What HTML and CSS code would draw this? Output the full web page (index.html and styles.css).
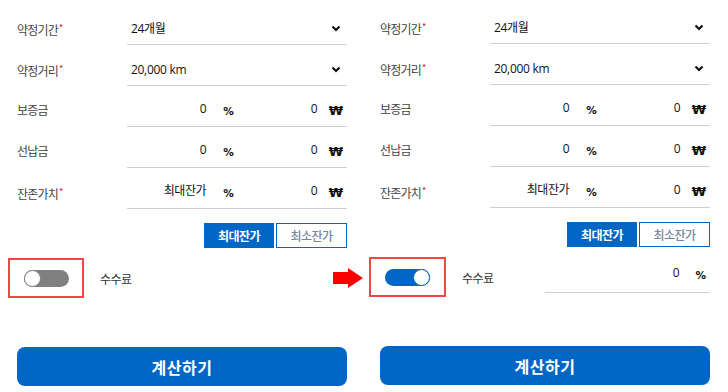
FILE: index.html
```html
<!DOCTYPE html>
<html lang="ko">
<head>
<meta charset="utf-8">
<title>계산</title>
<link rel="stylesheet" href="styles.css">
</head>
<body>
<div class="page">
  <section class="panel panel-left">
    <div class="row">
      <label class="lbl">약정기간<span class="req">*</span></label>
      <div class="field select"><span class="val">24개월</span><svg class="chev" width="10" height="7" viewBox="0 0 10 7"><polyline points="1.5,1.5 5,5 8.5,1.5" fill="none" stroke="#111" stroke-width="2.2"/></svg></div>
    </div>
    <div class="row">
      <label class="lbl">약정거리<span class="req">*</span></label>
      <div class="field select"><span class="val">20,000 km</span><svg class="chev" width="10" height="7" viewBox="0 0 10 7"><polyline points="1.5,1.5 5,5 8.5,1.5" fill="none" stroke="#111" stroke-width="2.2"/></svg></div>
    </div>
    <div class="row">
      <label class="lbl">보증금</label>
      <div class="field split"><span class="num">0</span><span class="unit">%</span><span class="num n2">0</span><span class="unit won">₩</span></div>
    </div>
    <div class="row">
      <label class="lbl">선납금</label>
      <div class="field split"><span class="num">0</span><span class="unit">%</span><span class="num n2">0</span><span class="unit won">₩</span></div>
    </div>
    <div class="row">
      <label class="lbl">잔존가치<span class="req">*</span></label>
      <div class="field split"><span class="num">최대잔가</span><span class="unit">%</span><span class="num n2">0</span><span class="unit won">₩</span></div>
    </div>
    <div class="btn-row">
      <button class="seg seg-on">최대잔가</button>
      <button class="seg">최소잔가</button>
    </div>
    <div class="fee-row">
      <div class="mark"><span class="toggle"><span class="knob"></span></span></div>
      <span class="fee-label">수수료</span>
    </div>
    <button class="calc">계산하기</button>
  </section>

  <svg class="arrow" width="30" height="20" viewBox="0 0 30 20"><polygon points="0,4 15,4 15,0 30,10 15,20 15,16 0,16" fill="#ff0000"/></svg>

  <section class="panel panel-right">
    <div class="row">
      <label class="lbl">약정기간<span class="req">*</span></label>
      <div class="field select"><span class="val">24개월</span><svg class="chev" width="10" height="7" viewBox="0 0 10 7"><polyline points="1.5,1.5 5,5 8.5,1.5" fill="none" stroke="#111" stroke-width="2.2"/></svg></div>
    </div>
    <div class="row">
      <label class="lbl">약정거리<span class="req">*</span></label>
      <div class="field select"><span class="val">20,000 km</span><svg class="chev" width="10" height="7" viewBox="0 0 10 7"><polyline points="1.5,1.5 5,5 8.5,1.5" fill="none" stroke="#111" stroke-width="2.2"/></svg></div>
    </div>
    <div class="row">
      <label class="lbl">보증금</label>
      <div class="field split"><span class="num">0</span><span class="unit">%</span><span class="num n2">0</span><span class="unit won">₩</span></div>
    </div>
    <div class="row">
      <label class="lbl">선납금</label>
      <div class="field split"><span class="num">0</span><span class="unit">%</span><span class="num n2">0</span><span class="unit won">₩</span></div>
    </div>
    <div class="row">
      <label class="lbl">잔존가치<span class="req">*</span></label>
      <div class="field split"><span class="num">최대잔가</span><span class="unit">%</span><span class="num n2">0</span><span class="unit won">₩</span></div>
    </div>
    <div class="btn-row">
      <button class="seg seg-on">최대잔가</button>
      <button class="seg">최소잔가</button>
    </div>
    <div class="fee-row">
      <div class="mark mark-r"><span class="toggle toggle-on"><span class="knob"></span></span></div>
      <span class="fee-label">수수료</span>
      <div class="fee-field"><span class="num">0</span><span class="unit">%</span></div>
    </div>
    <button class="calc">계산하기</button>
  </section>
</div>
</body>
</html>
```

FILE: styles.css
```css
* { box-sizing: border-box; }
html, body { margin: 0; padding: 0; background: #fff; }
body {
  font-family: "Open Sans", "Noto Sans CJK KR", sans-serif;
  font-size: 12px;
  color: #222;
  width: 728px;
  height: 392px;
  overflow: hidden;
}
.page {
  position: relative;
  display: flex;
}
.panel {
  display: flex;
  flex-direction: column;
}
.panel-left { width: 363px; padding: 4px 16px 0 17px; }
.panel-right { width: 365px; padding: 3px 18px 0 17px; }

.row { display: flex; height: 41px; }
.lbl {
  width: 110px;
  padding-top: 8px;
  line-height: 32px;
  color: #444;
  font-family: "Noto Sans CJK KR", sans-serif;
  letter-spacing: -0.8px;
}
.req { color: #e4002b; font-size: 9px; vertical-align: 4px; margin-left: 1px; }
.field {
  flex: 1;
  display: flex;
  align-items: center;
  height: 41px;
  padding-top: 8px;
  border-bottom: 1px solid #cfcfcf;
}
.select { justify-content: space-between; padding-left: 4px; padding-right: 6px; }
.val { color: #111; letter-spacing: -0.3px; }
.chev { display: block; margin-top: 1px; }

.split { display: grid; grid-template-columns: 85px 32px 1fr 26px; }
.num { text-align: right; padding-right: 6px; color: #111; margin-top: -4px; letter-spacing: -0.5px; }
.n2 { padding-right: 4px; }
.unit { text-align: center; font-weight: 700; font-size: 10.5px; color: #111; font-family: "DejaVu Sans", sans-serif; letter-spacing: -1px; margin-top: 1px; }
.won { text-align: right; padding-right: 4px; font-size: 13px; letter-spacing: 0; margin-top: 0; }

.btn-row { display: flex; justify-content: flex-end; gap: 2px; margin-top: 14px; }
.seg {
  width: 71px;
  height: 25px;
  border: 1px solid #0066c6;
  background: #fff;
  color: #7585a6;
  font-family: "Noto Sans CJK KR", sans-serif;
  font-size: 12px;
  font-weight: 500;
  letter-spacing: -0.5px;
  padding: 0;
}
.seg-on { width: 70px; background: #0066c6; color: #fff; font-weight: 700; }

.fee-row { display: flex; align-items: center; margin-top: 10px; height: 40px; }
.mark {
  width: 76px;
  height: 40px;
  margin-left: -9px;
  border: 2px solid #f24646;
  display: flex;
  align-items: center;
  justify-content: center;
}
.mark-r { margin-left: -11px; width: 77px; }
.toggle {
  width: 45px;
  height: 17px;
  border-radius: 9px;
  background: #808080;
  display: flex;
  align-items: center;
}
.knob {
  width: 17px;
  height: 17px;
  border-radius: 50%;
  background: #fff;
  border: 1.5px solid #808080;
}
.toggle-on { background: #0066c6; justify-content: flex-end; }
.toggle-on .knob { border-color: #0066c6; }
.fee-label {
  margin-left: 16px;
  color: #333;
  font-family: "Noto Sans CJK KR", sans-serif;
  letter-spacing: -0.5px;
}
.fee-field {
  margin-left: auto;
  width: 165px;
  height: 36px;
  display: grid;
  grid-template-columns: 1fr 26px;
  align-items: center;
  border-bottom: 1px solid #cfcfcf;
  align-self: flex-start;
}
.fee-field .num { padding-right: 5px; }
.fee-field .unit { text-align: right; padding-right: 5px; }

.calc {
  margin-top: 49px;
  height: 39px;
  border: none;
  border-radius: 8px;
  background: #0066c6;
  color: #fff;
  font-family: "Noto Sans CJK KR", sans-serif;
  font-size: 16px;
  font-weight: 700;
  letter-spacing: 0.5px;
}
.arrow { position: absolute; left: 333px; top: 268px; }
```
